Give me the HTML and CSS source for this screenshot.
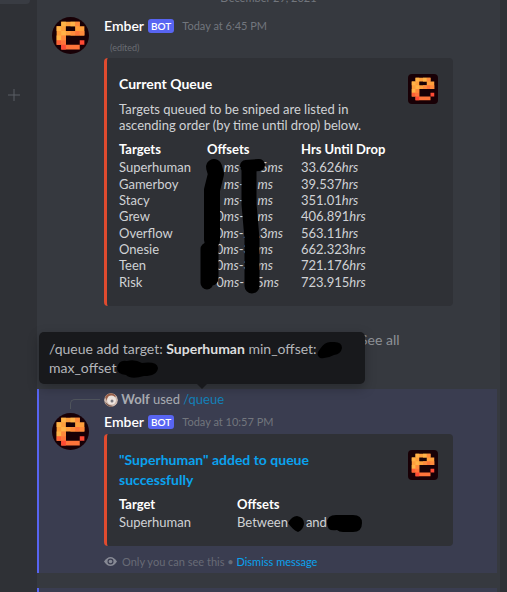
FILE: index.html
```html
<!DOCTYPE html>
<html lang="en">
<head>
<meta charset="utf-8">
<title>Ember queue</title>
<link rel="stylesheet" href="styles.css">
</head>
<body>
<svg class="defs" aria-hidden="true">
  <symbol id="ember" viewBox="0 0 8 8">
    <rect width="8" height="8" fill="#180006"/>
    <path fill="#ff9f3c" d="M2 1h4v1h1v2H3v2H1V2h1zM3 2v1h2V2z" fill-rule="evenodd"/>
    <path fill="#ffb347" d="M2 1h1v1H2zM4 1h1v1H4zM1 2h1v1H1zM2 3h1v1H2zM1 4h1v1H1z"/>
    <path fill="#ff8a3c" d="M5 1h1v1H5zM4 3h1v1H4zM6 3h1v1H6zM2 4h1v1H2z"/>
    <path fill="#ff743a" d="M5 3h1v1H5zM2 5h1v1H2zM2 6h4v1H2z"/>
    <path fill="#ff4a34" d="M2 6h1v1H2zM6 5h1v1H6z"/>
    <path fill="#ff6037" d="M1 5h1v1H1z"/>
  </symbol>
</svg>
<div class="app">
  <nav class="sidebar" aria-label="Channels">
    <div class="channel"></div>
    <button class="add" aria-label="Create channel"><svg viewBox="0 0 12 12"><path d="M6 0v12M0 6h12"/></svg></button>
  </nav>
  <main class="chat">
    <div class="divider">December 29, 2021</div>

    <article class="message">
      <svg class="avatar"><use href="#ember"/></svg>
      <div class="body">
        <header class="head"><strong class="name">Ember</strong><span class="bot">BOT</span><time class="time">Today at 6:45 PM</time></header>
        <div class="edited">(edited)</div>
        <section class="embed queue">
          <svg class="thumb"><use href="#ember"/></svg>
          <h2 class="title">Current Queue</h2>
          <p class="text">Targets queued to be sniped are listed in ascending order (by time until drop) below.</p>
          <div class="tablewrap">
          <table class="table">
            <thead><tr><th class="c1">Targets</th><th class="c2">Offsets</th><th>Hrs Until Drop</th></tr></thead>
            <tbody>
              <tr><td>Superhuman</td><td><span class="min"><em>ms</em>-</span><span class="max wide">5<em>ms</em></span></td><td>33.626<em>hrs</em></td></tr>
              <tr><td>Gamerboy</td><td><span class="min"><em>ms</em>-</span><span class="max"><em>ms</em></span></td><td>39.537<em>hrs</em></td></tr>
              <tr><td>Stacy</td><td><span class="min"><em>ms</em>-</span><span class="max"><em>ms</em></span></td><td>351.01<em>hrs</em></td></tr>
              <tr><td>Grew</td><td><span class="min">0<em>ms</em>-</span><span class="max"><em>ms</em></span></td><td>406.891<em>hrs</em></td></tr>
              <tr><td>Overflow</td><td><span class="min long">0<em>ms</em>-2</span><span class="max wide">.3<em>ms</em></span></td><td>563.11<em>hrs</em></td></tr>
              <tr><td>Onesie</td><td><span class="min long">0<em>ms</em>-3</span><span class="max"><em>ms</em></span></td><td>662.323<em>hrs</em></td></tr>
              <tr><td>Teen</td><td><span class="min long">0<em>ms</em>-3</span><span class="max"><em>ms</em></span></td><td>721.176<em>hrs</em></td></tr>
              <tr><td>Risk</td><td><span class="min">0<em>ms</em>-</span><span class="max mid">5<em>ms</em></span></td><td>723.915<em>hrs</em></td></tr>
            </tbody>
          </table>
          <svg class="ink" viewBox="0 0 100 140" aria-hidden="true">
            <path d="M15 27L17 34L13 50V100" stroke-width="16"/>
            <path d="M8 109V143M13 105V139" stroke-width="13"/>
            <path d="M47 26L60 25" stroke-width="12"/>
            <path d="M50 30V64L53 99V146" stroke-width="15"/>
          </svg>
          </div>
        </section>
      </div>
    </article>

    <div class="hint">See all</div>

    <article class="message own">
      <div class="spine"></div>
      <div class="reply">
        <svg class="mini" viewBox="0 0 14 14"><circle cx="7" cy="7" r="7" fill="#cdb9ae"/><path d="M1 4Q4-1 9 0.500L12 3 10 5 5 3 3 8z" fill="#9a604a"/><circle cx="7.500" cy="7" r="4.500" fill="#eee4de"/><circle cx="8" cy="8" r="1.500" fill="#77777e"/><path d="M1 9l4 3 4 1-2 1Q2 13 1 9" fill="#765448"/></svg>
        <strong>Wolf</strong> used <a href="#queue">/queue</a>
        <div class="tooltip" role="tooltip">/queue add target: <strong>Superhuman</strong> min_offset:<svg class="blot a" viewBox="0 0 26 18"><path d="M3 8Q8 0 15 1q10-1 10 6-1 6-8 7-7 4-14 3-5-3 0-9"/></svg><br>max_offset<svg class="blot b" viewBox="0 0 42 20"><path d="M1 9Q3 0 11 2q8-2 15 2 15-2 16 5-1 8-14 8-13 4-18-1Q1 15 1 9"/></svg></div>
      </div>
      <svg class="avatar"><use href="#ember"/></svg>
      <div class="body">
        <header class="head"><strong class="name">Ember</strong><span class="bot">BOT</span><time class="time">Today at 10:57 PM</time></header>
        <section class="embed">
          <svg class="thumb"><use href="#ember"/></svg>
          <h2 class="title"><a href="#superhuman">"Superhuman" added to queue successfully</a></h2>
          <dl class="fields">
            <div><dt>Target</dt><dd>Superhuman</dd></div>
            <div><dt>Offsets</dt><dd>Between<svg class="blot c" viewBox="0 0 16 17"><path d="M0 8Q4 1 9 1q7 1 7 8-1 6-6 8Q5 15 0 8"/></svg>and<svg class="blot d" viewBox="0 0 35 19"><path d="M0 9Q0 1 9 1H26q9 0 9 8 0 9-9 9H16q-4 0-6-2-10 2-10-7"/></svg></dd></div>
          </dl>
        </section>
        <footer class="foot"><svg class="eye" viewBox="0 0 13 9"><path fill-rule="evenodd" d="M0 4.500Q3 0 6.500 0T13 4.500Q10 9 6.500 9T0 4.500zM6.500 1.500a3 3 0 1 0 0 6 3 3 0 1 0 0-6z"/><circle cx="6.500" cy="4.500" r="1.800"/></svg><span>Only you can see this • <a href="#dismiss">Dismiss message</a></span></footer>
      </div>
    </article>

    <article class="message own next">
      <div class="reply"><svg class="mini" viewBox="0 0 14 14"><circle cx="7" cy="7" r="7" fill="#b58a70"/></svg></div>
    </article>
  </main>
  <aside class="members"></aside>
</div>
</body>
</html>
```
FILE: styles.css
```css
* { box-sizing: border-box; }
body {
  margin: 0;
  background: #36393f;
  color: #d0d2d5;
  font: 13px/16px Lato, "Noto Sans", sans-serif;
}
a { color: #0aa2ee; text-decoration: none; }
.defs { position: absolute; width: 0; height: 0; }
.app { display: flex; height: 100vh; overflow: hidden; }

.sidebar { flex: 0 0 37px; background: #2f3136; }
.channel { width: 30px; height: 4px; background: #393c43; border-radius: 0 0 4px 0; }
.add { display: block; margin: 85px 0 0 8px; padding: 0; border: 0; background: none; width: 12px; height: 12px; }
.add svg { display: block; width: 12px; height: 12px; fill: none; stroke: #5b5e65; stroke-width: 1; }
.members { flex: 0 0 7px; background: #2f3136; }

.chat { flex: 1; min-width: 0; }
.divider { height: 17px; margin-top: -9px; text-align: center; font-size: 11px; line-height: 14px; color: #72767d; }

.message { position: relative; display: grid; grid-template-columns: 37px 1fr; column-gap: 15px; padding: 9px 47px 0 15px; }
.avatar { width: 37px; height: 37px; border-radius: 50%; }
.head { display: flex; align-items: center; height: 18px; }
.name { font-size: 14px; font-weight: 600; color: #fff; }
.bot { margin: 0 8px 0 4px; padding: 0 3px; border-radius: 3px; background: #5865f2; color: #fff; font-size: 10px; font-weight: 600; line-height: 14px; }
.time { font-size: 11px; color: #72767d; }
.edited { padding: 7px 0 0 6px; height: 23px; font-size: 9px; line-height: 12px; color: #6a6d73; }

.embed { border-left: 3px solid #e04b2f; border-radius: 4px; background: #2f3136; padding: 16px 15px 15px 12px; }
.thumb { float: right; width: 30px; height: 30px; border-radius: 4px; }
.title { margin: 0; padding-right: 90px; font-size: 14px; line-height: 20px; font-weight: 700; color: #fff; }
.text { margin: 7px 64px 0 0; }
.queue { padding-bottom: 16px; }
.tablewrap { position: relative; margin-top: 7px; }
.table { width: 100%; height: 150px; border-collapse: collapse; table-layout: fixed; }
.table th, .table td { padding: 0; text-align: left; line-height: 16px; white-space: nowrap; }
.table th { line-height: 19px; color: #fff; }
.c1 { width: 88px; }
.c2 { width: 94px; }
.min, .max { display: inline-block; text-align: right; }
.min { width: 37px; }
.min.long { width: 44px; margin-right: -7px; }
.max { width: 29px; }
.max.mid { width: 35px; }
.max.wide { width: 39px; }
.ink { position: absolute; left: 80px; top: 0; width: 100px; height: 140px; overflow: visible; fill: none; stroke: #000; stroke-linecap: round; stroke-linejoin: round; }

.hint { padding: 26px 0 0 323px; height: 83px; font-size: 14px; color: #8e9297; }

.own { background: #3a3d50; border-left: 2px solid #5865f2; margin-right: 3px; padding: 1px 44px 2px 13px; }
.reply { position: relative; grid-column: 2; height: 18px; line-height: 18px; margin-bottom: 5px; color: #a9acb2; }
.reply a { color: #1380b8; }
.mini { width: 14px; height: 14px; border-radius: 50%; vertical-align: -3px; }
.spine { position: absolute; left: 31px; top: 10px; width: 30px; height: 10px; border: solid #4f545c; border-width: 1px 0 0 1px; border-radius: 5px 0 0 0; }
.own .head { margin-bottom: 3px; }
.fields { display: grid; grid-template-columns: 118px 1fr; margin: 5px 0 0; line-height: 18px; white-space: nowrap; }
.fields dt { font-weight: 700; color: #fff; }
.fields dd { margin: 0; }
.foot { display: flex; align-items: center; gap: 5px; height: 25px; padding-top: 6px; font-size: 11px; color: #686b76; }
.eye { width: 13px; height: 9px; fill: #868994; }
.next { margin-top: 15px; height: 30px; }

.tooltip { position: absolute; left: -65px; top: -58px; width: 326px; padding: 7px 10px; border-radius: 5px; background: #18191c; color: #b4b6ba; font-size: 14px; line-height: 19px; white-space: nowrap; box-shadow: 0 4px 12px #0004; }
.tooltip strong { color: #dcddde; }
.tooltip::after { content: ""; position: absolute; left: 158px; top: 100%; border: 5px solid transparent; border-top-color: #18191c; border-bottom: 0; }
.blot { fill: #000; vertical-align: middle; margin: -4px 0; }
.a { width: 26px; height: 18px; }
.b { width: 42px; height: 20px; }
.c { width: 16px; height: 17px; margin-right: 2px; }
.d { width: 35px; height: 19px; }
```
